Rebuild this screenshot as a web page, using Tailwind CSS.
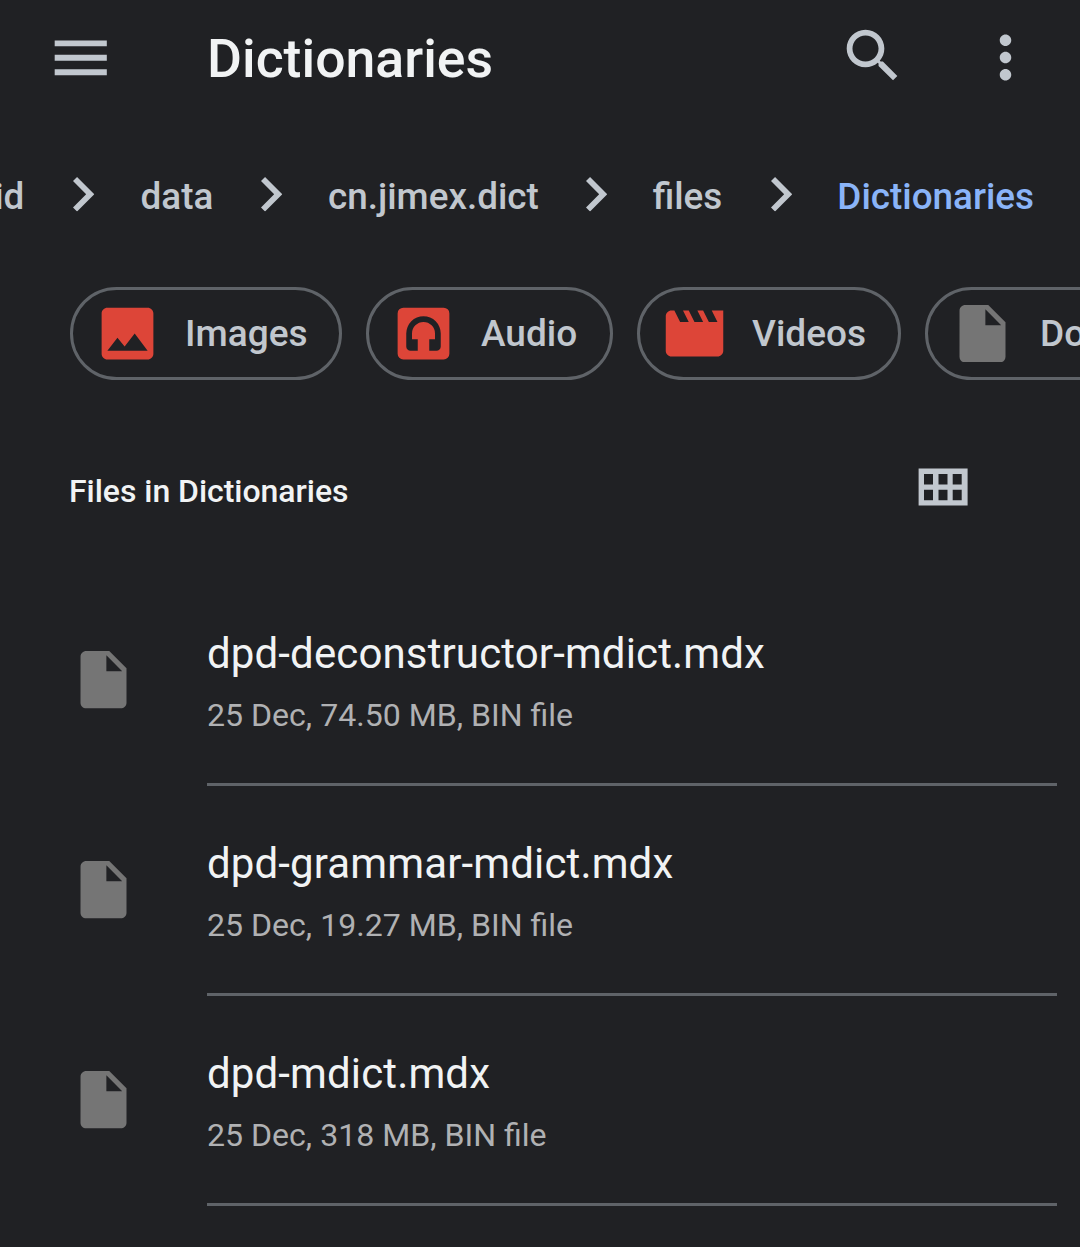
<!DOCTYPE html>
<html lang="en">
<head>
<meta charset="utf-8">
<title>Dictionaries</title>
<script src="https://cdn.jsdelivr.net/npm/@tailwindcss/browser@4"></script>
</head>
<body class="bg-[#202124] font-[Roboto,sans-serif] text-[#f1f3f4] w-[1080px] h-[1247px] overflow-hidden">
<svg class="hidden">
  <symbol id="file" viewBox="4 2 16 20"><path d="M6 2c-1.1 0-1.99.9-1.99 2L4 20c0 1.1.89 2 1.99 2H18c1.1 0 2-.9 2-2V8l-6-6H6zm7 7V3.5L18.5 9H13z"/></symbol>
  <symbol id="chevron" viewBox="8.59 6 7.41 12"><path d="M10 6L8.59 7.41 13.17 12l-4.58 4.59L10 18l6-6z"/></symbol>
</svg>

<header class="h-[116px] flex items-center pl-[45.5px] pr-[40px] text-[#c1c7ce] fill-current">
  <svg class="size-[69.5px] shrink-0 -mt-px" viewBox="0 0 24 24"><path d="M3 18h18v-2H3v2zm0-5h18v-2H3v2zm0-7v2h18V6H3z"/></svg>
  <h1 class="ml-[92px] mt-[2px] flex-1 whitespace-nowrap text-[53.6px] leading-[64px] font-medium text-[#f1f3f4]">Dictionaries</h1>
  <svg class="size-[69.5px] shrink-0 mr-[64px] -mt-[4px]" viewBox="0 0 24 24"><path d="M15.5 14h-.79l-.28-.27C15.41 12.59 16 11.11 16 9.5 16 5.91 13.09 3 9.5 3S3 5.91 3 9.5 5.91 16 9.5 16c1.61 0 3.09-.59 4.23-1.57l.27.28v.79l5 4.99L20.49 19l-4.99-5zm-6 0C7.01 14 5 11.99 5 9.5S7.01 5 9.5 5 14 7.01 14 9.5 11.99 14 9.5 14z"/></svg>
  <svg class="size-[69px] shrink-0 -mt-[2px]" viewBox="0 0 24 24"><path d="M12 8c1.1 0 2-.9 2-2s-.9-2-2-2-2 .9-2 2 .9 2 2 2zm0 2c-1.1 0-2 .9-2 2s.9 2 2 2 2-.9 2-2-.9-2-2-2zm0 6c-1.1 0-2 .9-2 2s.9 2 2 2 2-.9 2-2-.9-2-2-2z"/></svg>
</header>

<nav class="h-[160px] pt-[2px] flex items-center justify-end pr-[46px] overflow-hidden whitespace-nowrap text-[36.85px] leading-[48px] font-medium text-[#c1c7ce] fill-current">
  <span>Android</span>
  <svg class="w-[21.3px] h-[34.5px] ml-[49px] mr-[46px] -mt-[5px] shrink-0"><use href="#chevron"/></svg>
  <span>data</span>
  <svg class="w-[21.3px] h-[34.5px] ml-[48px] mr-[45.4px] -mt-[5px] shrink-0"><use href="#chevron"/></svg>
  <span>cn.jimex.dict</span>
  <svg class="w-[21.3px] h-[34.5px] ml-[47.2px] mr-[45.4px] -mt-[5px] shrink-0"><use href="#chevron"/></svg>
  <span>files</span>
  <svg class="w-[21.3px] h-[34.5px] ml-[48.4px] mr-[45.4px] -mt-[5px] shrink-0"><use href="#chevron"/></svg>
  <span class="text-[#8ab4f8]">Dictionaries</span>
</nav>

<section class="mt-[11px] pl-[70px] flex gap-[24px] overflow-hidden whitespace-nowrap text-[37px] leading-[48px] font-medium text-[#c1c7ce]">
  <div class="w-[272px] h-[93px] shrink-0 flex items-center rounded-full border-3 border-[#5f6368] pl-[20px]">
    <svg class="size-[69px] mr-[23px] shrink-0 fill-[#dd4538]" viewBox="0 0 24 24"><path d="M21 19V5c0-1.1-.9-2-2-2H5c-1.1 0-2 .9-2 2v14c0 1.1.9 2 2 2h14c1.1 0 2-.9 2-2zM8.5 13.5l2.5 3.01L14.5 12l4.5 6H5l3.5-4.5z"/></svg>
    <span>Images</span>
  </div>
  <div class="w-[247px] h-[93px] shrink-0 flex items-center rounded-full border-3 border-[#5f6368] pl-[20px]">
    <svg class="size-[69px] mr-[23px] shrink-0 fill-[#dd4538]" viewBox="0 0 24 24"><path fill-rule="evenodd" d="M5 3h14a2 2 0 0 1 2 2v14a2 2 0 0 1-2 2H5a2 2 0 0 1-2-2V5a2 2 0 0 1 2-2zM12 6a6 6 0 0 0-6 6v4.5A1.5 1.5 0 0 0 7.5 18H10v-4H8v-2a4 4 0 0 1 8 0v2h-2v4h2.5a1.5 1.5 0 0 0 1.5-1.5V12a6 6 0 0 0-6-6z"/></svg>
    <span>Audio</span>
  </div>
  <div class="w-[264px] h-[93px] shrink-0 flex items-center rounded-full border-3 border-[#5f6368] pl-[20px]">
    <svg class="size-[69px] mr-[23px] shrink-0 fill-[#dd4538]" viewBox="0 0 24 24"><path d="M18 4l2 4h-3l-2-4h-2l2 4h-3l-2-4H8l2 4H7L5 4H4c-1.1 0-1.99.9-1.99 2L2 18c0 1.1.9 2 2 2h16c1.1 0 2-.9 2-2V4h-4z"/></svg>
    <span>Videos</span>
  </div>
  <div class="w-[344px] h-[93px] shrink-0 flex items-center rounded-full border-3 border-[#5f6368] pl-[31px]">
    <svg class="w-[47px] h-[57.5px] mr-[34px] shrink-0 fill-[#757575]"><use href="#file"/></svg>
    <span>Documents</span>
  </div>
</section>

<section class="mt-[59px] h-[96px] flex items-center justify-between pl-[69px] pr-[112px]">
  <h2 class="pt-[7px] text-[32px] leading-[40px] tracking-[-0.04px] font-medium">Files in Dictionaries</h2>
  <svg class="w-[50px] h-[38px] fill-[#c1c7ce]" viewBox="0 0 50 38"><path fill-rule="evenodd" d="M.6.6h49v37h-49zM6 6v10.5h9V6zM20.5 6v10.5h9V6zM34.7 6v10.5h9V6zM6 21.7v10.5h9V21.7zM20.5 21.7v10.5h9V21.7zM34.7 21.7v10.5h9V21.7z"/></svg>
</section>

<main class="mt-[41px]">
  <article class="h-[210px] flex pl-[80px] pr-[23px]">
    <svg class="w-[47px] h-[57.5px] mt-[75px] mr-[80px] shrink-0 fill-[#757575]"><use href="#file"/></svg>
    <div class="flex-1 h-[210px] pt-[50px] border-b-3 border-[#5f6368]">
      <h3 class="text-[42px] leading-[56px] tracking-[0.13px]">dpd-deconstructor-mdict.mdx</h3>
      <p class="mt-[11px] text-[32.08px] leading-[44px] text-[#b0b1b3]">25 Dec, 74.50 MB, BIN file</p>
    </div>
  </article>
  <article class="h-[210px] flex pl-[80px] pr-[23px]">
    <svg class="w-[47px] h-[57.5px] mt-[75px] mr-[80px] shrink-0 fill-[#757575]"><use href="#file"/></svg>
    <div class="flex-1 h-[210px] pt-[50px] border-b-3 border-[#5f6368]">
      <h3 class="text-[42px] leading-[56px] tracking-[0.13px]">dpd-grammar-mdict.mdx</h3>
      <p class="mt-[11px] text-[32.08px] leading-[44px] text-[#b0b1b3]">25 Dec, 19.27 MB, BIN file</p>
    </div>
  </article>
  <article class="h-[210px] flex pl-[80px] pr-[23px]">
    <svg class="w-[47px] h-[57.5px] mt-[75px] mr-[80px] shrink-0 fill-[#757575]"><use href="#file"/></svg>
    <div class="flex-1 h-[210px] pt-[50px] border-b-3 border-[#5f6368]">
      <h3 class="text-[42px] leading-[56px] tracking-[0.13px]">dpd-mdict.mdx</h3>
      <p class="mt-[11px] text-[32.08px] leading-[44px] text-[#b0b1b3]">25 Dec, 318 MB, BIN file</p>
    </div>
  </article>
</main>
</body>
</html>
